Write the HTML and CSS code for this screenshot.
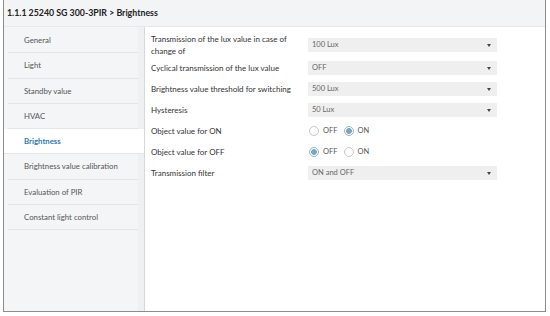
FILE: index.html
```html
<!DOCTYPE html>
<html lang="en">
<head>
    <meta charset="UTF-8">
    <meta name="viewport" content="width=device-width, initial-scale=1.0">
    <title>Brightness</title>
    <link rel="stylesheet" href="styles.css">
</head>
<body>
    <div class="frame">
        <div class="title">1.1.1 25240 SG 300-3PIR &gt; Brightness</div>

        <div class="main">
            <ul class="menu">
                <li>General</li>
                <li>Light</li>
                <li>Standby value</li>
                <li>HVAC</li>
                <li class="active">Brightness</li>
                <li>Brightness value calibration</li>
                <li>Evaluation of PIR</li>
                <li>Constant light control</li>
            </ul>

            <div class="params">
                <div class="row tall">
                    <div class="label">Transmission of the lux value in case of change of</div>
                    <div class="select">100 Lux</div>
                </div>
                <div class="row">
                    <div class="label">Cyclical transmission of the lux value</div>
                    <div class="select">OFF</div>
                </div>
                <div class="row">
                    <div class="label">Brightness value threshold for switching</div>
                    <div class="select">500 Lux</div>
                </div>
                <div class="row">
                    <div class="label">Hysteresis</div>
                    <div class="select">50 Lux</div>
                </div>
                <div class="row">
                    <div class="label">Object value for ON</div>
                    <div class="radios">
                        <span class="radio"></span>OFF
                        <span class="radio checked"></span>ON
                    </div>
                </div>
                <div class="row">
                    <div class="label">Object value for OFF</div>
                    <div class="radios">
                        <span class="radio checked"></span>OFF
                        <span class="radio"></span>ON
                    </div>
                </div>
                <div class="row">
                    <div class="label">Transmission filter</div>
                    <div class="select">ON and OFF</div>
                </div>
            </div>
        </div>
    </div>
</body>
</html>
```

FILE: styles.css
```css
body {
    margin: 0;
    font-family: Lato, "Liberation Sans", sans-serif;
    color: #333;
    background: #fff;
}
.frame {
    margin-left: 3px;
    width: 541px;
    height: 311px;
    border: 1px solid #8c8c8c;
    border-top: none;
    display: flex;
    flex-direction: column;
}
.title {
    height: 26px;
    line-height: 25px;
    padding-left: 3px;
    font-size: 8.8px;
    font-weight: 700;
    color: #222;
    background: #f3f4f5;
    border-bottom: 1px solid #e6e8ea;
}
.main {
    flex: 1;
    display: flex;
}
.menu {
    list-style: none;
    margin: 0;
    padding: 1px 0 0;
    width: 134px;
    background: #f3f5f7;
    border-right: 6px solid #eef0f2;
    box-shadow: 1px 0 0 #d6d8da;
}
.menu li {
    height: 24.3px;
    line-height: 24px;
    padding-left: 16px;
    margin-left: 4px;
    font-size: 7.8px;
    color: #555;
    white-space: nowrap;
    border-bottom: 1px solid #e3e5e7;
}
.menu li.active {
    background: #fff;
    margin-left: 0;
    padding-left: 20px;
    margin-right: -6px;
    color: #2b7bb3;
    font-weight: 700;
}
.params {
    padding: 6px 0 0 7px;
}
.row {
    display: flex;
    align-items: center;
    height: 21px;
}
.row.tall {
    height: 24px;
}
.label {
    width: 150px;
    margin-right: 7px;
    font-size: 8px;
    line-height: 12px;
}
.select {
    position: relative;
    width: 185px;
    height: 14px;
    line-height: 14px;
    padding-left: 4px;
    font-size: 7.5px;
    color: #666;
    background: #efefef;
}
.select::after {
    content: "";
    position: absolute;
    right: 6px;
    top: 6px;
    border-left: 2.5px solid transparent;
    border-right: 2.5px solid transparent;
    border-top: 3px solid #444;
}
.radios {
    display: flex;
    align-items: center;
    font-size: 7.5px;
    color: #555;
}
.radio {
    box-sizing: border-box;
    width: 10px;
    height: 10px;
    margin-left: 1px;
    margin-right: 4px;
    border: 1px solid #c8c8c8;
    border-radius: 50%;
    background: #fff;
}
.radios .radio:nth-of-type(2) {
    margin-left: 6px;
}
.radio.checked {
    border-color: #8fb7cc;
    background: radial-gradient(circle, #7aa6c0 0 2.6px, #fff 3.2px);
}
```
